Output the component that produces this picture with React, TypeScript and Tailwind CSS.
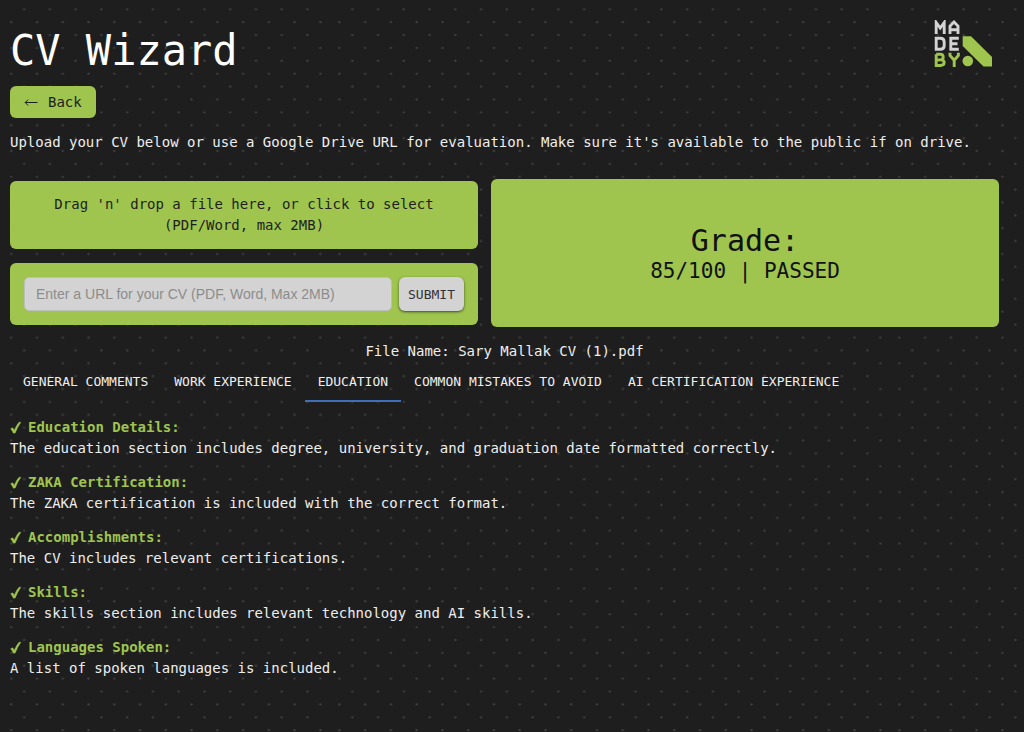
const COL_STEP = 12.88;
const TILE_COLS = 43;
const TILE_ROWS = 22;

const dots: { x: number; y: number }[] = [];
for (let row = 0; row < TILE_ROWS; row++) {
  for (let col = 0; col < TILE_COLS; col++) {
    if ((row + col) % 2 === 1) {
      dots.push({ x: 9.9 + col * COL_STEP, y: 9.3 + row * COL_STEP });
    }
  }
}

const tabs = [
  "General Comments",
  "Work Experience",
  "Education",
  "Common Mistakes to Avoid",
  "AI Certification Experience",
];

const findings = [
  {
    title: "Education Details:",
    text: "The education section includes degree, university, and graduation date formatted correctly.",
  },
  { title: "ZAKA Certification:", text: "The ZAKA certification is included with the correct format." },
  { title: "Accomplishments:", text: "The CV includes relevant certifications." },
  { title: "Skills:", text: "The skills section includes relevant technology and AI skills." },
  { title: "Languages Spoken:", text: "A list of spoken languages is included." },
];

function DotBackground() {
  return (
    <svg className="pointer-events-none absolute inset-0 -z-10 h-full w-full" aria-hidden="true">
      <defs>
        <pattern id="dots" x="-230.5" y="0" width="560" height="289.6" patternUnits="userSpaceOnUse">
          {dots.map((d) => (
            <circle key={`${d.x}-${d.y}`} cx={d.x} cy={d.y} r="1.1" fill="#444444" />
          ))}
        </pattern>
      </defs>
      <rect width="100%" height="100%" fill="url(#dots)" />
    </svg>
  );
}

function Logo() {
  return (
    <svg viewBox="0 0 60 48" className="h-12 w-15" role="img" aria-label="Made by">
      <g fill="none" strokeWidth="2.9">
        <g stroke="#d3d3d3">
          <path d="M2.2 14V2.5L6.2 8L10.2 2.5V14" />
          <path d="M16 14V6L20 2L24 6V14M16 9.8H24" />
          <path d="M2.2 18.2H6.2Q10.2 18.2 10.2 22V25.5Q10.2 29.3 6.2 29.3H2.2Z" />
          <path d="M24.8 18.2H16.8V29.3H24.8M16.8 23.8H23.5" />
        </g>
        <g stroke="#9fc54f">
          <path d="M2.2 34.2H6.3Q9.2 34.2 9.2 37Q9.2 39.9 6.3 39.9H2.2M6.3 39.9Q10.2 39.9 10.2 42.6Q10.2 45.5 6.3 45.5H2.2V34.2" />
          <path d="M16 32.8V35.5L20.2 40.2L24.4 35.5V32.8M20.2 40V47" />
        </g>
      </g>
      <circle cx="33.8" cy="41" r="5.3" fill="#9fc54f" />
      <path d="M28.7 16.2H37L58 37V46.5H49.5L28.7 26Z" fill="#9fc54f" />
    </svg>
  );
}

function Check() {
  return (
    <svg viewBox="0 0 12 14" className="h-3.5 w-3 shrink-0" aria-hidden="true">
      <path
        d="M0.6 7.7L2.8 6.8L4.2 9.2Q6.6 3.8 9 1.3L10.9 1.2Q7.4 6 5.2 12L3.4 12.2Q2.2 9.6 0.6 7.7Z"
        fill="#9fc54f"
        stroke="#9fc54f"
        strokeWidth="0.4"
      />
    </svg>
  );
}

function BackArrow() {
  return (
    <svg viewBox="0 0 14 10" className="h-2.5 w-3.5" fill="none" stroke="currentColor" aria-hidden="true">
      <path d="M1.2 5.5H13.5M4.2 2.5L1.2 5.5L4.2 8.5" />
    </svg>
  );
}

export default function App() {
  return (
    <div className="relative isolate min-h-screen bg-[#1e1e1e] px-2.5 pt-5 pb-14 font-['DejaVu_Sans_Mono',monospace] text-sm leading-[21px] text-[#eeeeee]">
      <DotBackground />
      <header className="flex items-start justify-between pr-5">
        <h1 className="pt-1.5 text-[42px] leading-[50px] text-white">CV Wizard</h1>
        <Logo />
      </header>

      <main className="mt-2.5 pr-[15px]">
        <button
          type="button"
          className="flex h-8 items-center gap-2.5 rounded-md bg-[#9fc54f] px-3.5 text-[#1e1e1e]"
        >
          <BackArrow />
          Back
        </button>
        <p className="mt-3.5">
          Upload your CV below or use a Google Drive URL for evaluation. Make sure it's available to the public if on
          drive.
        </p>

        <div className="mt-[26px] flex gap-[13px]">
          <div className="flex w-[468px] shrink flex-col gap-3.5 py-0.5">
            <button
              type="button"
              className="w-full rounded-md bg-[#9fc54f] px-8 py-[13px] text-center text-[#1e1e1e]"
            >
              Drag 'n' drop a file here, or click to select (PDF/Word, max 2MB)
            </button>
            <form
              className="flex gap-[7px] rounded-md bg-[#9fc54f] p-3.5"
              onSubmit={(event) => event.preventDefault()}
            >
              <input
                type="text"
                aria-label="CV URL"
                placeholder="Enter a URL for your CV (PDF, Word, Max 2MB)"
                className="h-[34px] min-w-0 flex-1 rounded-[5px] border border-[#bdbdbd] bg-[#d3d3d3] px-[11px] font-['Liberation_Sans',sans-serif] text-sm text-[#1e1e1e] placeholder:text-[#8c8c8c]"
              />
              <button
                type="submit"
                className="rounded-md bg-[#d3d3d3] px-[9px] text-[13px] text-[#333333] uppercase shadow-sm shadow-black/50"
              >
                Submit
              </button>
            </form>
          </div>
          <section className="flex flex-1 flex-col items-center justify-center rounded-md bg-[#9fc54f] pt-1 text-[#111111]">
            <h2 className="text-[30px] leading-8">Grade:</h2>
            <p className="text-[21px] leading-7">85/100 | PASSED</p>
          </section>
        </div>

        <p className="mt-3.5 text-center">File Name: Sary Mallak CV (1).pdf</p>

        <div role="tablist" className="flex h-10 text-[13px] uppercase">
          {tabs.map((tab) => (
            <button
              key={tab}
              type="button"
              role="tab"
              aria-selected={tab === "Education"}
              className="border-b-2 border-transparent px-[13px] whitespace-nowrap uppercase aria-selected:border-[#3f6fb8]"
            >
              {tab}
            </button>
          ))}
        </div>

        <div className="mt-[15px] flex flex-col gap-[13px]">
          {findings.map((item) => (
            <section key={item.title}>
              <h3 className="flex items-center gap-1.5 font-bold text-[#9fc54f]">
                <Check />
                {item.title}
              </h3>
              <p>{item.text}</p>
            </section>
          ))}
        </div>
      </main>
    </div>
  );
}
